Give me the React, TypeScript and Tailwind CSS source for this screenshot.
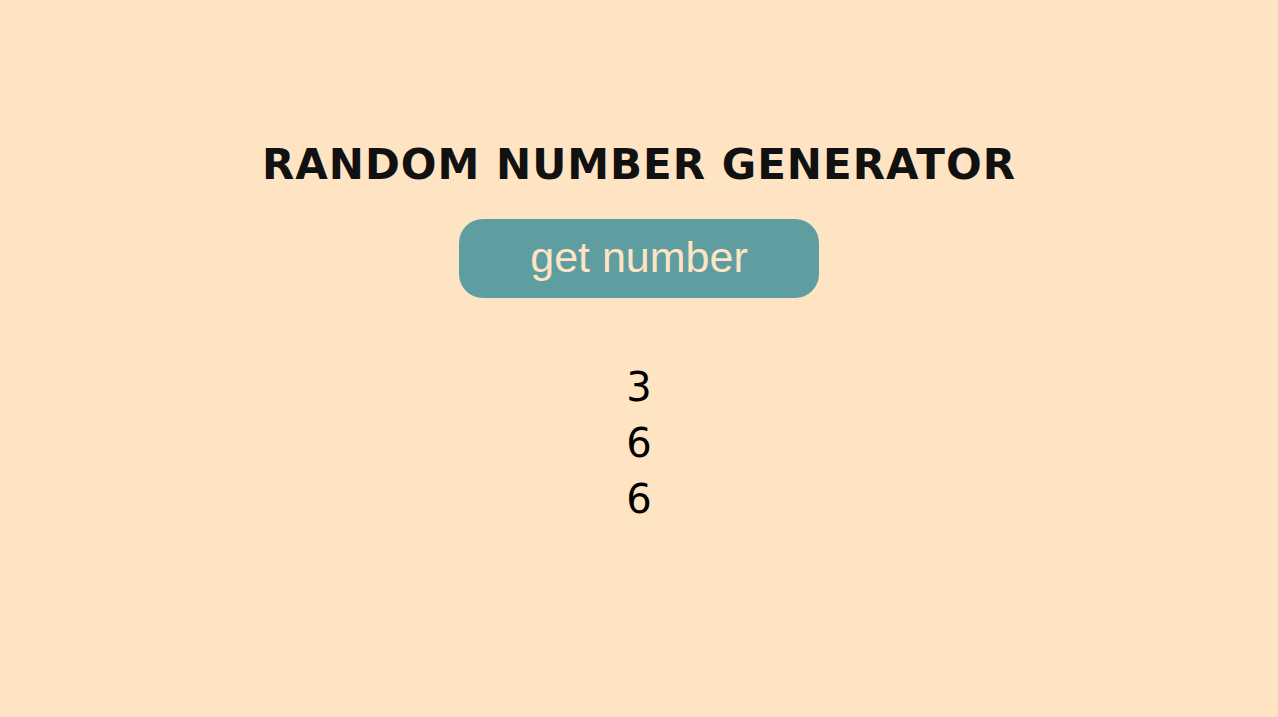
export default function App() {
  return (
    <div className="min-h-[717px] w-full bg-[#ffe4c4] flex flex-col items-center" style={{ fontFamily: '"DejaVu Sans", Verdana, sans-serif' }}>
      <h1 className="mt-[138px] text-[42px] leading-[54px] font-bold tracking-[1px] text-[#111]">RANDOM NUMBER GENERATOR</h1>
      <button className="mt-[27px] w-[360px] h-[79px] rounded-[24px] bg-[#5f9ea0] text-[#ffe4c4] text-[43px] leading-none pb-[2px]" style={{ fontFamily: '"Liberation Sans", Arial, sans-serif' }}>get number</button>
      <div className="mt-[61px] flex flex-col items-center text-[40px] leading-[56px] text-black">
        <div>3</div>
        <div>6</div>
        <div>6</div>
      </div>
    </div>
  );
}
